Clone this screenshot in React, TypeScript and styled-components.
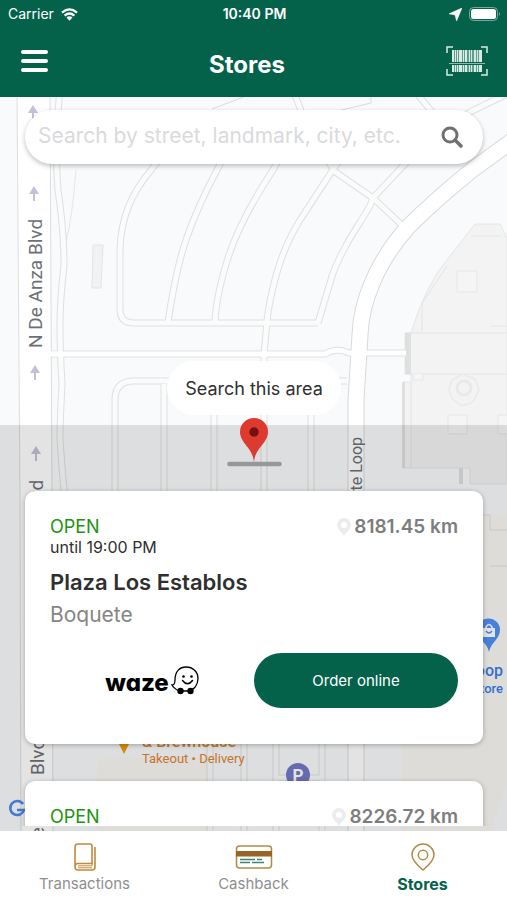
import React from "react";
import styled, { createGlobalStyle } from "styled-components";

const GlobalStyle = createGlobalStyle`
  *, *::before, *::after { box-sizing: border-box; }
  body { margin: 0; background: #fff; }
  body, button, input { font-family: Inter, "Liberation Sans", sans-serif; }
`;

const green = "#04624b";
const gold = "#b5884a";

const Screen = styled.div`
  display: flex;
  flex-direction: column;
  height: 100vh;
  min-height: 640px;
  overflow: hidden;
`;

const Header = styled.header`
  background: ${green};
  color: #fff;
`;

const StatusBar = styled.div`
  display: grid;
  grid-template-columns: 1fr auto 1fr;
  align-items: center;
  height: 28px;
  padding: 0 6px 0 8px;
  font-size: 14px;
  line-height: 20px;
`;

const StatusGroup = styled.div<{ $end?: boolean }>`
  display: flex;
  align-items: center;
  gap: 7px;
  justify-content: ${(p) => (p.$end ? "flex-end" : "flex-start")};
`;

const Clock = styled.time`
  font-weight: 600;
`;

const TitleBar = styled.div`
  display: grid;
  grid-template-columns: 1fr auto 1fr;
  align-items: center;
  height: 69px;
  padding: 0 19px 3px 20px;
`;

const Title = styled.h1`
  margin: 7px 0 0;
  padding-right: 14px;
  font-size: 24px;
  line-height: 28px;
  font-weight: 700;
`;

const IconButton = styled.button<{ $end?: boolean }>`
  display: flex;
  justify-self: ${(p) => (p.$end ? "end" : "start")};
  padding: 0;
  border: 0;
  background: none;
  color: inherit;
  cursor: pointer;
`;

const MapArea = styled.main`
  position: relative;
  flex: 1;
  min-height: 0;
  display: grid;
  grid-template-rows: 328px minmax(0, 1fr);
  overflow: hidden;
`;

const MapCanvas = styled.svg`
  position: absolute;
  inset: 0;
  width: 100%;
  height: 100%;
  background: #f8fafb;
`;

const MapControls = styled.div`
  position: relative;
  z-index: 2;
  display: flex;
  flex-direction: column;
  align-items: center;
  justify-content: space-between;
  padding: 13px 24px 10px 25px;
`;

const SearchBox = styled.form`
  display: flex;
  align-items: center;
  align-self: stretch;
  height: 54px;
  padding: 0 20px 0 13px;
  border-radius: 27px;
  background: #fff;
  box-shadow: 0 2px 5px rgba(0, 0, 0, 0.25);
`;

const SearchInput = styled.input`
  flex: 1;
  min-width: 0;
  height: 40px;
  padding: 0 0 3px;
  border: 0;
  outline: 0;
  background: none;
  font-size: 21px;
  color: #333;
  &::placeholder { color: #dadadc; opacity: 1; }
`;

const AreaButton = styled.button`
  height: 54px;
  padding: 0 18px;
  border: 0;
  border-radius: 27px;
  background: #fff;
  color: #2f2f2f;
  font-size: 18px;
  cursor: pointer;
`;

const CenterMarker = styled.svg`
  position: absolute;
  top: 321px;
  left: 50%;
  margin-left: -27px;
`;

const Sheet = styled.section`
  position: relative;
  z-index: 1;
  background: rgba(0, 0, 0, 0.11);
  padding-bottom: 5px;
`;

const StoreList = styled.ul`
  display: flex;
  flex-direction: column;
  gap: 37px;
  height: 100%;
  margin: 0;
  padding: 66px 24px 0 25px;
  overflow: hidden;
  list-style: none;
`;

const StoreCard = styled.li`
  flex: none;
  padding: 26px 25px 36px;
  border-radius: 10px;
  background: #fff;
  box-shadow: 0 1px 5px rgba(0, 0, 0, 0.28);
`;

const CardTop = styled.div`
  display: flex;
  justify-content: space-between;
  align-items: center;
  line-height: 20px;
`;

const OpenState = styled.span`
  color: #21940f;
  font-size: 18px;
`;

const Distance = styled.span`
  display: flex;
  align-items: center;
  gap: 3px;
  color: #7d7d7d;
  font-size: 19px;
  font-weight: 600;
`;

const Hours = styled.p`
  margin: 0;
  color: #2f2f2f;
  font-size: 16px;
  line-height: 20px;
`;

const StoreName = styled.h2`
  margin: 10px 0 0;
  color: #2f2f2f;
  font-size: 22px;
  font-weight: 600;
  line-height: 30px;
`;

const Town = styled.p`
  margin: 4px 0 0;
  color: #858585;
  font-size: 21px;
  line-height: 28px;
`;

const Actions = styled.div`
  display: grid;
  grid-template-columns: 1fr 1fr;
  align-items: center;
  margin-top: 24px;
`;

const WazeLink = styled.a`
  display: flex;
  align-items: flex-end;
  justify-content: center;
  gap: 2px;
  color: #000;
  text-decoration: none;
`;

const WazeName = styled.span`
  font-size: 24px;
  font-weight: 800;
  line-height: 24px;
  font-feature-settings: "cv11";
`;

const OrderButton = styled.button`
  height: 55px;
  border: 0;
  border-radius: 28px;
  background: ${green};
  color: #fff;
  font-size: 15px;
  cursor: pointer;
`;

const TabBar = styled.nav`
  display: grid;
  grid-template-columns: repeat(3, 1fr);
  height: 69px;
  background: #fff;
`;

const Tab = styled.a<{ $active?: boolean }>`
  display: flex;
  flex-direction: column;
  align-items: center;
  gap: 3px;
  padding-top: 12px;
  color: ${(p) => (p.$active ? green : "#8f8f8f")};
  font-size: ${(p) => (p.$active ? 16 : 15)}px;
  font-weight: ${(p) => (p.$active ? 700 : 400)};
  line-height: 20px;
  text-decoration: none;
`;

const minorRoads = [
  "M178 140Q160 158 151 170C132 193 121 216 120 250V309Q120 323 134 323H318",
  "M232 140L217 170Q198 206 187 237T168 322",
  "M290 140L273 170Q240 220 228 258T215 322",
  "M318 323L333 273Q342 250 357 227T373 198L402 167Q428 140 470 112L507 94",
  "M350 145L332 171L300 220Q284 246 276 276T267 322L264 354V500",
  "M293 90L304 118L334 171L373 198L403 226",
  "M414 90L437 118",
  "M170 381H134Q115 381 115 400V500",
  "M164 384V500M214 384V500M311 384V500M170 381H347",
  "M60 90Q54 140 58 190Q64 230 64 265Q60 300 60 325Q60 350 62 385Q60 420 60 440Q62 470 65 500",
  "M210 735V831M244 735V831M276 735V831M322 735V831",
  "M276 778H322",
];

const midRoads = ["M52 354H325Q337 347 349 353H406"];
const loopRoad = "M520 135L472 170Q435 200 408 227C375 264 361 304 360 335L356 400V840";

const arrows = [
  [33, 113],
  [34, 194],
  [35, 373],
  [36, 454],
];

function StreetMap() {
  return (
    <MapCanvas viewBox="0 97 507 734" preserveAspectRatio="xMidYMin slice" aria-label="Map" role="img">
      <path d="M212 109L262 90M300 120L371 103V90" fill="none" stroke="#dadada" />
      <path d="M76 170Q72 220 66 242" fill="none" stroke="#e5e6e7" />
      <path d="M97 762L105 757H210V831H97ZM482 515H507V785L490 831H402V735H482Z" fill="#faf8f4" />
      <path d="M482 515H490V530H507M490 566H507" fill="none" stroke="#e0e0df" />
      <path d="M475 224H500L507 238V484H470V468H403V382H411V374H405V333H411Q425 285 450 256Z" fill="#f3f3f3" stroke="#e6e6e6" />
      <path d="M405 333H507M405 374H507M422 331V303L447 266M471 236H500M411 382V468" fill="none" stroke="#e3e4e4" />
      <path d="M405 333H411V374H405ZM402 382H405V468H402ZM459 468H463V484H459Z" fill="#dedfdf" />
      <path d="M457 271H477V292H457ZM448 415H467V434H448ZM498 415H510V434H498ZM491 326H507M413 374V380H423V374" fill="#f5f5f5" stroke="#e6e6e6" />
      <path d="M452 380L463 374L475 379L479 390L473 402L462 406L452 399L449 389Z" fill="#f3f3f3" stroke="#ebebeb" strokeWidth="2" />
      <circle cx="464" cy="388" r="7" fill="none" stroke="#e9e9e9" strokeWidth="3" />
      <path d="M93 245H103L101 288H92Z" fill="#f1f2f3" stroke="#e3e4e6" />
      <g fill="none" stroke="#dfe0e1">
        {minorRoads.map((d) => (
          <path key={d} d={d} strokeWidth="7" />
        ))}
        {midRoads.map((d) => (
          <path key={d} d={d} strokeWidth="7" />
        ))}
        <path d={loopRoad} strokeWidth="17" stroke="#d8d9da" />
      </g>
      <g fill="none" stroke="#fafbfb" strokeWidth="5">
        {minorRoads.map((d) => (
          <path key={d} d={d} />
        ))}
        {midRoads.map((d) => (
          <path key={d} d={d} stroke="#fff" />
        ))}
        <path d={loopRoad} strokeWidth="15" stroke="#fff" />
      </g>
      <path d="M17 90L20 500L21 840H53L52 500L50 90Z" fill="#fff" stroke="#dcdddf" />
      <path d="M48 354H58" stroke="#fff" strokeWidth="5" />
      <g fill="#c0c1d6">
        {arrows.map(([x, y]) => (
          <path key={y} d={`M${x} ${y - 8}l5 8h-4v7h-2v-7h-4z`} />
        ))}
      </g>
      <g fontFamily="Roboto, sans-serif" fill="#6c7074" fontSize="19">
        <text transform="translate(42 348) rotate(-90)">N De Anza Blvd</text>
        <text transform="translate(43 609) rotate(-90)">N De Anza Blvd</text>
        <text transform="translate(44 868) rotate(-90)">N De Anza Blvd</text>
        <text transform="translate(362 437) rotate(-90)" textAnchor="end" fontSize="16">Infinite Loop</text>
      </g>
      <g fontFamily="Roboto, sans-serif" fill="#dc8432">
        <text x="142" y="747" fontSize="16" fontWeight="500">&amp; Brewhouse</text>
        <text x="142" y="763" fontSize="13">Takeout • Delivery</text>
        <path d="M118 742H130L124 754Z" fill="#f09a10" />
      </g>
      <circle cx="298" cy="775" r="12" fill="#7478c4" />
      <text x="298" y="781" fontFamily="Roboto, sans-serif" fontSize="17" fontWeight="700" fill="#fff" textAnchor="middle">P</text>
      <path d="M489 652C487 642 477 639 477 630A11.500 11.500 0 0 1 500 630C500 639 491 642 489 652Z" fill="#5090f5" />
      <path d="M483 628H495V637H483Z" fill="#fff" />
      <path d="M486 628V627Q489 622 492 627V628" fill="none" stroke="#fff" strokeWidth="1.500" />
      <path d="M486 631Q489 635 492 631" fill="none" stroke="#5090f5" strokeWidth="1.500" />
      <g fontFamily="Roboto, sans-serif" fill="#3c7dec" textAnchor="end">
        <text x="503" y="676" fontSize="16" fontWeight="500">Loop</text>
        <text x="503" y="693" fontSize="13" fontWeight="500">Store</text>
      </g>
      <path d="M23 804A7 7 0 1 0 24 810H17" fill="none" stroke="#4b88ec" strokeWidth="2.500" />
    </MapCanvas>
  );
}

function WifiIcon() {
  return (
    <svg width="17" height="13" viewBox="0 0 17 13" aria-hidden="true">
      <g fill="none" stroke="#fff" strokeWidth="2.200">
        <path d="M1 4.600Q8.500-1.700 16 4.600" />
        <path d="M3.600 7.600Q8.500 3.400 13.400 7.600" />
      </g>
      <path d="M5.500 9.600Q8.500 7 11.500 9.600L8.500 12.800Z" fill="#fff" />
    </svg>
  );
}

function BarcodeIcon() {
  const bars = [
    [6, 2], [9, 1], [11, 1], [13, 3], [17, 1], [19, 2], [23, 1], [25, 1], [28, 2], [31, 1], [33, 3],
  ];
  return (
    <svg width="42" height="30" viewBox="0 0 42 30" aria-hidden="true">
      <path d="M1 7V1H7M35 1H41V7M41 23V29H35M7 29H1V23" fill="none" stroke="#d7ebe4" strokeWidth="1.500" />
      <path d="M6 4H36V16H6ZM6 19H36V26H6Z" fill="#5f9d8c" />
      <g fill="#d7ebe4">
        {bars.map(([x, w]) => (
          <path key={x} d={`M${x} 4h${w}v12h-${w}zM${x} 19h${w}v7h-${w}z`} />
        ))}
      </g>
      <path d="M3 17.500H39" stroke="#8dbcae" />
    </svg>
  );
}

function DistancePin() {
  return (
    <svg width="14" height="18" viewBox="0 0 14 18" aria-hidden="true">
      <path fill="#ececec" fillRule="evenodd" d="M7 0a7 7 0 0 1 7 7c0 4-4 6-7 11C4 13 0 11 0 7a7 7 0 0 1 7-7Zm0 4a3 3 0 1 0 0 6 3 3 0 0 0 0-6Z" />
    </svg>
  );
}

function WazeFace() {
  return (
    <svg width="28" height="29" viewBox="0 0 28 29" aria-hidden="true">
      <path d="M8 25C4 23 2 21 1 19Q4 19 4 14C4 5 9 1 15 1C22 1 27 6 27 12.500C27 19 23 24 17 25Z" fill="#fff" stroke="#000" strokeWidth="1.300" />
      <circle cx="9.500" cy="25" r="3.200" />
      <circle cx="19.500" cy="25" r="3.200" />
      <circle cx="12.500" cy="10.500" r="1.300" />
      <circle cx="20.500" cy="10.500" r="1.300" />
      <path d="M11.500 14.500Q16.500 21 21.500 14.500" fill="none" stroke="#000" strokeWidth="1.500" strokeLinecap="round" />
    </svg>
  );
}

function BookIcon() {
  return (
    <svg width="22" height="28" viewBox="0 0 22 28" fill="none" stroke="#c08a3a" strokeWidth="1.600" aria-hidden="true">
      <path d="M1 24V4Q1 1 4 1H16Q18 1 18 3V20.500H4Q1 20.500 1 24Q1 27 4 27H18Q21 27 21 24V4" />
      <path d="M4 22.800H18V20M4 24.800H18" strokeWidth="1" />
    </svg>
  );
}

function CardIcon() {
  return (
    <svg width="38" height="28" viewBox="0 0 38 28" aria-hidden="true">
      <rect x="1.500" y="3" width="35" height="22" rx="3" fill="#fff" stroke={gold} strokeWidth="1.500" />
      <path d="M1 8H37V13.500H1Z" fill="#976526" />
      <path d="M5 16.500H20M22 16.500H27M5 19.500H15M17 19.500H29" stroke="#3f8673" strokeWidth="1.300" />
    </svg>
  );
}

function PlaceIcon() {
  return (
    <svg width="24" height="28" viewBox="0 0 24 28" fill="none" stroke={gold} strokeWidth="1.500" aria-hidden="true">
      <path d="M12 27Q1 18 1 12A11 11 0 0 1 23 12Q23 18 12 27Z" />
      <circle cx="12" cy="12" r="4.700" />
    </svg>
  );
}

type Store = {
  distance: string;
  details?: { name: string; town: string; hours: string };
};

const stores: Store[] = [
  {
    distance: "8181.45 km",
    details: { name: "Plaza Los Establos", town: "Boquete", hours: "until 19:00 PM" },
  },
  { distance: "8226.72 km" },
];

function StoreItem({ distance, details }: Store) {
  return (
    <StoreCard>
      <CardTop>
        <OpenState>OPEN</OpenState>
        <Distance>
          <DistancePin />
          {distance}
        </Distance>
      </CardTop>
      {details && (
        <>
          <Hours>{details.hours}</Hours>
          <StoreName>{details.name}</StoreName>
          <Town>{details.town}</Town>
          <Actions>
            <WazeLink href="#waze">
              <WazeName>waze</WazeName>
              <WazeFace />
            </WazeLink>
            <OrderButton type="button">Order online</OrderButton>
          </Actions>
        </>
      )}
    </StoreCard>
  );
}

export default function App() {
  return (
    <Screen>
      <GlobalStyle />
      <Header>
        <StatusBar>
          <StatusGroup>
            Carrier
            <WifiIcon />
          </StatusGroup>
          <Clock>10:40 PM</Clock>
          <StatusGroup $end>
            <svg width="13" height="13" viewBox="0 0 12 12" aria-hidden="true">
              <path d="M12 0L7 12L5.600 6.400L0 5.400Z" fill="#fff" stroke="#fff" strokeWidth="0.500" />
            </svg>
            <svg width="32" height="14" viewBox="0 0 32 14" aria-hidden="true">
              <rect x="0.500" y="0.500" width="28" height="13" rx="4" fill="none" stroke="#78aa9b" />
              <rect x="2" y="2" width="25" height="10" rx="2.500" fill="#fff" />
              <path d="M30 5Q32 7 30 9Z" fill="#78aa9b" />
            </svg>
          </StatusGroup>
        </StatusBar>
        <TitleBar>
          <IconButton type="button" aria-label="Menu">
            <svg width="29" height="24" viewBox="0 0 29 24" aria-hidden="true">
              <path d="M3 3H26M3 12H26M3 21H26" stroke="#fff" strokeWidth="4" strokeLinecap="round" />
            </svg>
          </IconButton>
          <Title>Stores</Title>
          <IconButton type="button" aria-label="Scan barcode" $end>
            <BarcodeIcon />
          </IconButton>
        </TitleBar>
      </Header>
      <MapArea>
        <StreetMap />
        <MapControls>
          <SearchBox role="search">
            <SearchInput type="text" aria-label="Search stores" placeholder="Search by street, landmark, city, etc." />
            <IconButton type="button" aria-label="Search">
              <svg width="22" height="22" viewBox="0 0 22 22" fill="none" stroke="#707070" aria-hidden="true">
                <circle cx="9" cy="9" r="7" strokeWidth="3" />
                <path d="M14 14L20 20" strokeWidth="3.500" strokeLinecap="round" />
              </svg>
            </IconButton>
          </SearchBox>
          <AreaButton type="button">Search this area</AreaButton>
          <CenterMarker width="55" height="50" viewBox="0 0 55 50" aria-hidden="true">
            <path d="M2.500 46H52.500" stroke="#979797" strokeWidth="4.500" strokeLinecap="round" />
            <path d="M27 44C26 30 13 25 13 14A14 14 0 0 1 41 14C41 25 28 30 27 44Z" fill="#dd3b30" />
            <circle cx="27" cy="14" r="4.700" fill="#75120f" />
          </CenterMarker>
        </MapControls>
        <Sheet aria-label="Nearby stores">
          <StoreList>
            {stores.map((store) => (
              <StoreItem key={store.distance} {...store} />
            ))}
          </StoreList>
        </Sheet>
      </MapArea>
      <TabBar>
        <Tab href="#transactions">
          <BookIcon />
          Transactions
        </Tab>
        <Tab href="#cashback">
          <CardIcon />
          Cashback
        </Tab>
        <Tab href="#stores" $active aria-current="page">
          <PlaceIcon />
          Stores
        </Tab>
      </TabBar>
    </Screen>
  );
}
